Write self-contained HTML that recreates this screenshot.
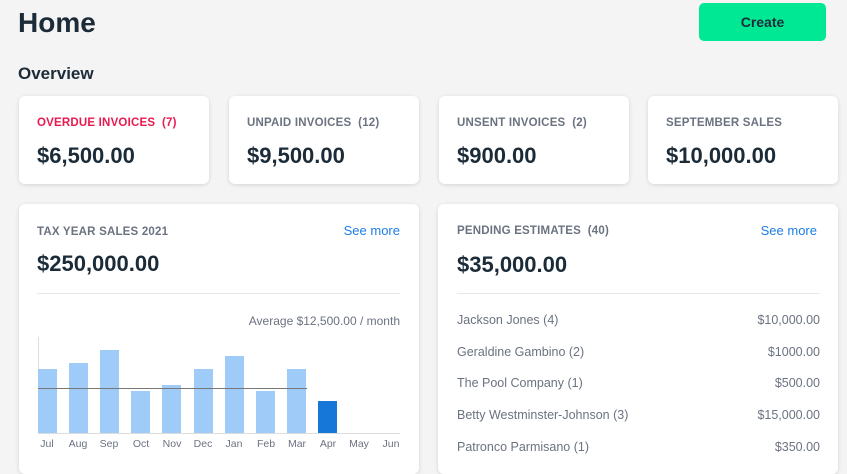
<!DOCTYPE html>
<html><head><meta charset="utf-8"><style>
*{margin:0;padding:0;box-sizing:border-box}
body{width:847px;height:460px;overflow:hidden;background:#f4f4f4;font-family:"Liberation Sans",sans-serif;color:#1b2b38;position:relative}
.a{position:absolute;white-space:nowrap}
.card{position:absolute;background:#fff;border-radius:6px;box-shadow:0 1px 4px rgba(0,0,0,.13)}
.lbl{font-size:11.5px;letter-spacing:.2px;color:#6b7280;font-weight:bold}
.amt{font-size:22px;font-weight:bold;color:#1b2b38}
.see{font-size:13px;color:#1e7ee6}
.row{font-size:12.5px;color:#6b7280}
.bar{position:absolute;background:#9ecbf7;width:19px}
.m{position:absolute;top:438px;font-size:10.5px;color:#6b7280;width:30px;text-align:center}
</style></head><body>
<div class="a" style="left:18px;top:7px;font-size:28px;font-weight:bold">Home</div>
<div class="a" style="left:699px;top:3px;width:127px;height:38px;background:#00e894;border-radius:5px;font-size:14px;font-weight:bold;text-align:center;line-height:38px">Create</div>
<div class="a" style="left:18px;top:64px;font-size:17px;font-weight:bold">Overview</div>

<div class="card" style="left:19px;top:96px;width:190px;height:88px"><div class="a lbl" style="left:18px;top:21px;color:#e8194f">OVERDUE INVOICES&nbsp; (7)</div><div class="a amt" style="left:18px;top:47px">$6,500.00</div></div>
<div class="card" style="left:229px;top:96px;width:190px;height:88px"><div class="a lbl" style="left:18px;top:21px">UNPAID INVOICES&nbsp; (12)</div><div class="a amt" style="left:18px;top:47px">$9,500.00</div></div>
<div class="card" style="left:439px;top:96px;width:190px;height:88px"><div class="a lbl" style="left:18px;top:21px">UNSENT INVOICES&nbsp; (2)</div><div class="a amt" style="left:18px;top:47px">$900.00</div></div>
<div class="card" style="left:648px;top:96px;width:190px;height:88px"><div class="a lbl" style="left:18px;top:21px">SEPTEMBER SALES</div><div class="a amt" style="left:18px;top:47px">$10,000.00</div></div>

<div class="card" style="left:19px;top:204px;width:400px;height:270px"></div>
<div class="a lbl" style="left:37px;top:226px">TAX YEAR SALES 2021</div>
<div class="a see" style="right:447px;top:223px">See more</div>
<div class="a amt" style="left:37px;top:251px">$250,000.00</div>
<div class="a" style="left:37px;top:293px;width:363px;height:1px;background:#e8e8e8"></div>
<div class="a" style="right:447px;top:314px;font-size:12px;color:#6b7280">Average $12,500.00 / month</div>
<div class="a" style="left:38px;top:337px;width:1px;height:96px;background:#ddd"></div>
<div class="a" style="left:38px;top:433px;width:362px;height:1px;background:#ddd"></div>
<div class="bar" style="left:38px;top:369px;height:64px"></div>
<div class="bar" style="left:69px;top:363px;height:70px"></div>
<div class="bar" style="left:100px;top:350px;height:83px"></div>
<div class="bar" style="left:131px;top:391px;height:42px"></div>
<div class="bar" style="left:162px;top:385px;height:48px"></div>
<div class="bar" style="left:194px;top:369px;height:64px"></div>
<div class="bar" style="left:225px;top:356px;height:77px"></div>
<div class="bar" style="left:256px;top:391px;height:42px"></div>
<div class="bar" style="left:287px;top:369px;height:64px"></div>
<div class="bar" style="left:318px;top:401px;height:32px;background:#1677d8"></div>
<div class="a" style="left:38px;top:388px;width:269px;height:1px;background:#777"></div>
<div class="m" style="left:32px">Jul</div><div class="m" style="left:63px">Aug</div><div class="m" style="left:94px">Sep</div><div class="m" style="left:126px">Oct</div><div class="m" style="left:157px">Nov</div><div class="m" style="left:188px">Dec</div><div class="m" style="left:219px">Jan</div><div class="m" style="left:251px">Feb</div><div class="m" style="left:282px">Mar</div><div class="m" style="left:313px">Apr</div><div class="m" style="left:344px">May</div><div class="m" style="left:376px">Jun</div>

<div class="card" style="left:438px;top:204px;width:400px;height:270px"></div>
<div class="a lbl" style="left:457px;top:225px">PENDING ESTIMATES&nbsp; (40)</div>
<div class="a see" style="right:30px;top:223px">See more</div>
<div class="a amt" style="left:457px;top:252px">$35,000.00</div>
<div class="a" style="left:457px;top:293px;width:363px;height:1px;background:#e8e8e8"></div>
<div class="a row" style="left:457px;top:313px">Jackson Jones (4)</div><div class="a row" style="right:27px;top:313px">$10,000.00</div>
<div class="a row" style="left:457px;top:345px">Geraldine Gambino (2)</div><div class="a row" style="right:27px;top:345px">$1000.00</div>
<div class="a row" style="left:457px;top:376px">The Pool Company (1)</div><div class="a row" style="right:27px;top:376px">$500.00</div>
<div class="a row" style="left:457px;top:408px">Betty Westminster-Johnson (3)</div><div class="a row" style="right:27px;top:408px">$15,000.00</div>
<div class="a row" style="left:457px;top:440px">Patronco Parmisano (1)</div><div class="a row" style="right:27px;top:440px">$350.00</div>
</body></html>
